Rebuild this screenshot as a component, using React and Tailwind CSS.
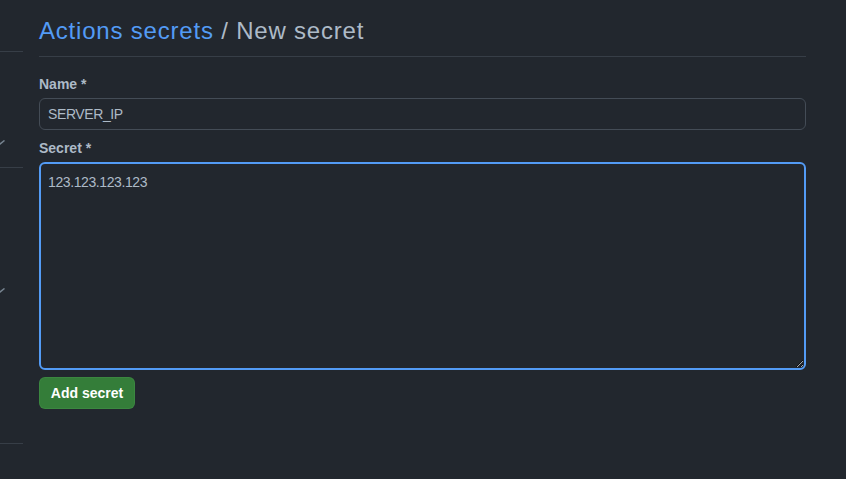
const Chevron = () => (
  <svg width="6" height="6" viewBox="0 0 6 6" className="block">
    <path d="M-2 5.5 L4.5 0.5" stroke="#768390" strokeWidth="1.5" fill="none" />
  </svg>
);

const App = () => {
  return (
    <div
      className="min-h-[479px] w-full bg-[#22272e] flex text-[#adbac7]"
      style={{ fontFamily: '"Liberation Sans", Arial, sans-serif' }}
    >
      {/* Sidebar - cut off */}
      <div className="w-[23px] shrink-0 flex flex-col">
        <div className="h-[52px] border-b border-[#373e47]"></div>
        <div className="h-[116px] border-b border-[#373e47] flex flex-col">
          <div className="mt-[88px]">
            <Chevron />
          </div>
        </div>
        <div className="h-[276px] border-b border-[#373e47]">
          <div className="mt-[120px]">
            <Chevron />
          </div>
        </div>
      </div>

      {/* Main */}
      <div className="flex-1 pl-4 pr-10 pt-4">
        <h1 className="text-2xl leading-[30px] tracking-[0.8px] pb-[10px] border-b border-[#373e47] font-normal">
          <span className="text-[#539bf5]">Actions secrets</span>
          <span className="text-[#adbac7]"> / New secret</span>
        </h1>

        <form className="mt-[17px] flex flex-col">
          <label className="text-sm leading-5 font-bold mb-1">Name *</label>
          <input
            type="text"
            defaultValue="SERVER_IP"
            className="h-8 w-full rounded-md border border-[#444c56] bg-[#22272e] px-2 text-sm tracking-[-0.4px] text-[#adbac7] outline-none"
          />

          <label className="text-sm leading-5 font-bold mt-2 mb-1">Secret *</label>
          <textarea
            defaultValue="123.123.123.123"
            className="h-[208px] w-full rounded-md border-2 border-[#539bf5] bg-[#22272e] px-[7px] py-2 text-sm leading-5 tracking-[-0.4px] text-[#adbac7] outline-none resize-y"
          />

          <div className="mt-[7px]">
            <button
              type="button"
              className="h-8 w-24 rounded-md bg-[#347d39] border border-[#46954a]/40 text-sm font-bold text-white"
            >
              Add secret
            </button>
          </div>
        </form>
      </div>
    </div>
  );
};

export default App;
